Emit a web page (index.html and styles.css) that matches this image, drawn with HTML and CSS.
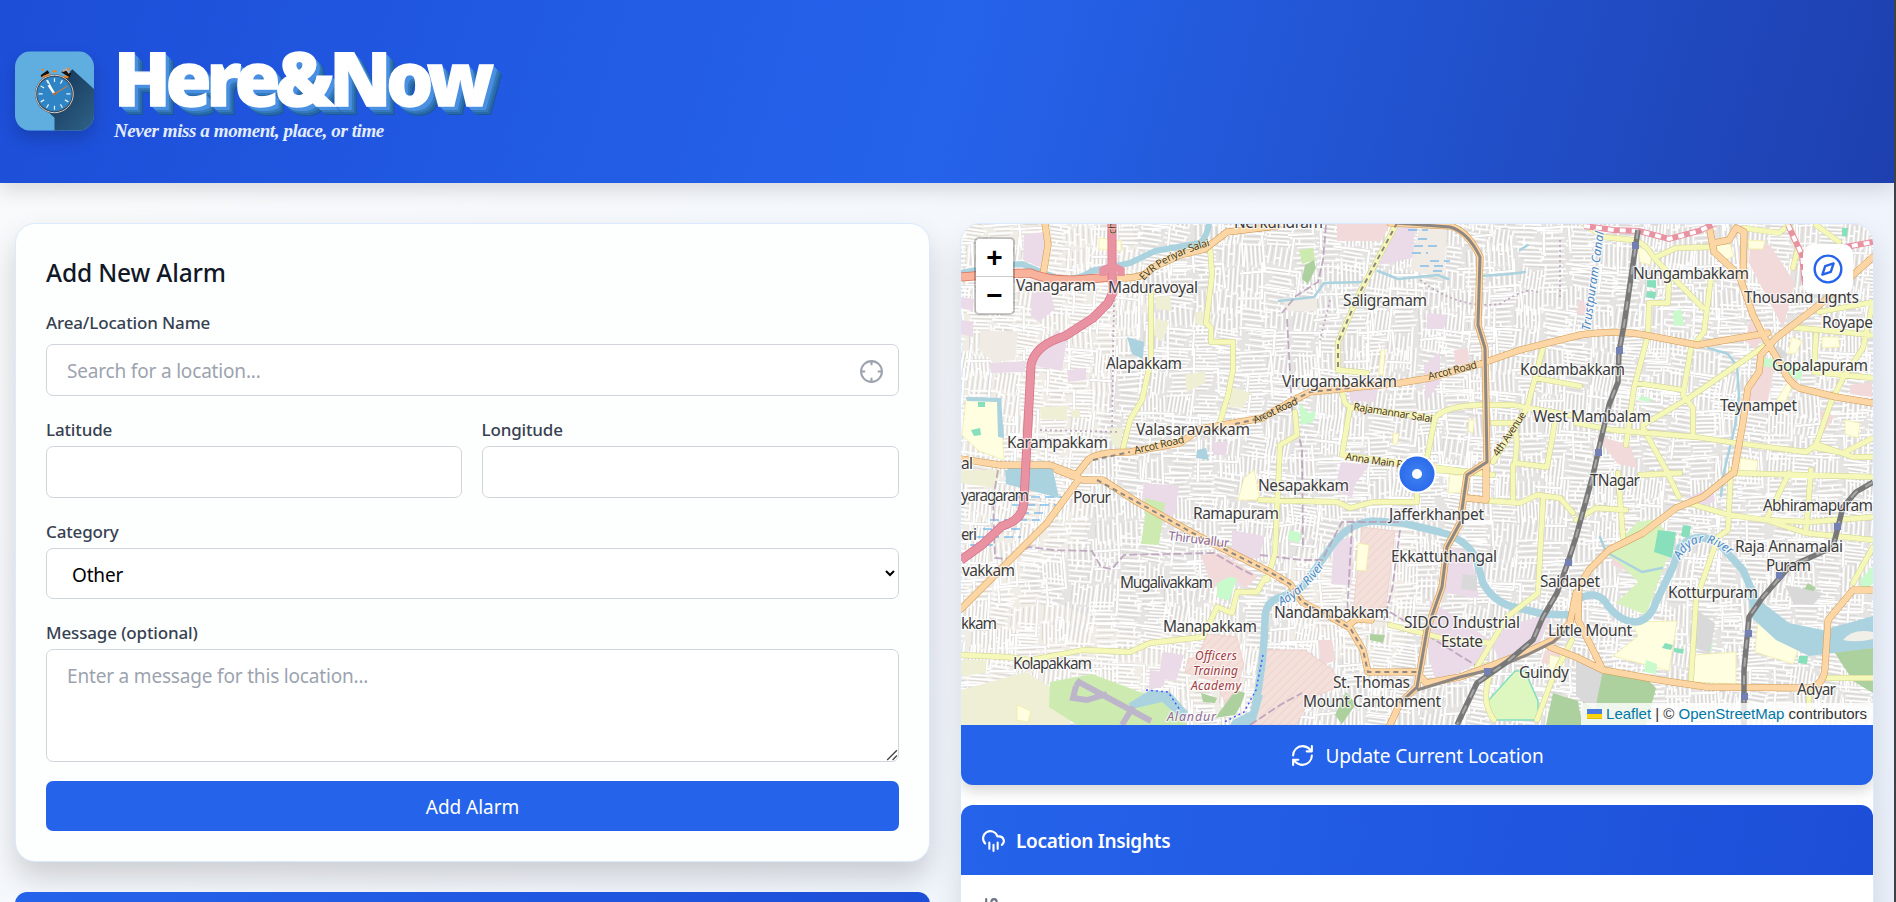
FILE: index.html
```html
<!DOCTYPE html>
<html lang="en">
<head>
<meta charset="utf-8">
<title>Here&amp;Now</title>
<link rel="stylesheet" href="styles.css">
</head>
<body>
<header class="site-header">
  <svg class="logo" viewBox="0 0 80 80" aria-hidden="true">
    <defs>
      <linearGradient id="logoShade" x1="0" y1="0" x2="1" y2="1"><stop offset=".25" stop-color="#173b5c"/><stop offset="1" stop-color="#2f6288"/></linearGradient>
    </defs>
    <rect width="80" height="80" fill="#60addf"/>
    <path d="M58 18 80 38V80H40V67L26 54Z" fill="url(#logoShade)"/>
    <path d="m26 24 7-5 2 3-8 4zM47 21l3-3 7 4-2 4z" fill="#111"/>
    <path d="m28 26 7-3M38 20h4M49 25l5 1M27 18l2 1M55 17l-2 2" stroke="#f58220" stroke-width="2"/>
    <path d="m48 20 4-2 3 4" stroke="#b9aaa5" stroke-width="2" fill="none"/>
    <circle cx="40" cy="43" r="18.7" fill="#2f84c5" stroke="#32363d" stroke-width="2"/>
    <circle cx="40" cy="43" r="19" fill="none" stroke="#d9d5d2"/>
    <path d="M40 27v4M40 55v4M24 43h4M52 43h4M32 29l2 3.500M48 29l-2 3.500M26 35l3.500 2M54 51l-3.500-2M26 51l3.500-2M32 57l2-3.500M48 57l-2-3.500" stroke="#e8f2fa" stroke-width="1.200"/>
    <path d="m40 43-6-9" stroke="#fff" stroke-width="2.400"/>
    <path d="m40 43-7-14" stroke="#fff" stroke-width="1"/>
    <path d="m40 43 13-8" stroke="#c57b45" stroke-width="1.200"/>
    <circle cx="40" cy="43" r="1.500" fill="#c2642c"/>
  </svg>
  <div class="brand">
    <h1 class="brand-name">Here&amp;Now</h1>
    <p class="brand-tagline">Never miss a moment, place, or time</p>
  </div>
</header>

<main class="content">
  <div class="column">
    <form class="alarm-card">
      <h2 class="card-title">Add New Alarm</h2>
      <label class="field-label field-label-wide">Area/Location Name</label>
      <div class="search">
        <input class="control search-input" placeholder="Search for a location...">
        <svg class="search-icon" viewBox="0 0 24 24" aria-hidden="true"><circle cx="12" cy="12" r="10"/><path d="M22 12h-4M6 12H2M12 6V2M12 22v-4"/></svg>
      </div>
      <div class="coords">
        <div><label class="field-label">Latitude</label><input class="control"></div>
        <div><label class="field-label">Longitude</label><input class="control"></div>
      </div>
      <label class="field-label">Category</label>
      <select class="control select"><option>Other</option></select>
      <label class="field-label">Message (optional)</label>
      <div class="message-box">
        <textarea class="control message" placeholder="Enter a message for this location..."></textarea>
        <svg class="grip" viewBox="0 0 12 12" aria-hidden="true"><path d="M2 11 11 2M7 11l4-4"/></svg>
      </div>
      <button class="add-button" type="button">Add Alarm</button>
    </form>
    <section class="alarm-list"></section>
  </div>

  <div class="side-card">
    <div class="map">
      <svg class="map-canvas" viewBox="961 224 912 501" preserveAspectRatio="none">
        <defs>
          <pattern id="hatch" width="6" height="6" patternUnits="userSpaceOnUse" patternTransform="rotate(45)"><rect width="6" height="6" fill="#f3e0da"/><path d="M0 0V6" stroke="#f1cfca" stroke-width="1.500"/></pattern>
          <radialGradient id="pin"><stop offset="0" stop-color="#3f83f2"/><stop offset="1" stop-color="#2c6bea"/></radialGradient>
          <path id="evr" d="M1144 281Q1164 258 1213 245"/>
          <path id="adyar1" d="M1281 606Q1306 594 1328 560"/>
          <path id="adyar2" d="M1680 560Q1698 526 1734 559"/>
        </defs>
        <rect x="961" y="223" width="912" height="503" fill="#e6e4e2"/>
        <path d="M961 223h170l20 90-40 60-30 180-120 50zM961 560l180 80 70-40 60 60-10 66H961zM1290 560l90-50 40 0-20 170-110-40z" fill="#f0ede7"/>
        <g id="blocks"></g>
        <g id="streets" fill="none"></g>

        <g fill="#ebdbe8">
          <path d="M1024 235l20-3 3 38-24-10zM1032 293l18-2 5 18-16 13-8-6zM961 297l13 2-1 12-12-3zM961 320l12 2v15l-12-3zM1035 358l22-28 10 8-5 33-26-5zM990 363l35-2v11l-34 1zM1068 370l18-2v12l-18 2zM1144 483l35 3-4 28-20 8-14-15zM1232 530l32 6-4 22-28 3zM1166 652l18 3-8 26-17-3 3-25zM1150 670l16 2-2 14-15 4zM1334 540l20-3-3 48-20-1zM1349 392l30-4-5 14-24-1zM1397 223l18 0-2 35-34 7zM1427 313l20 2-3 14-17 0zM1424 365l16-13 0 30-14 20zM1341 462l28 3-18 25-14-10zM1340 471l18 2-6 24-13-4zM1443 545l28 8 8 45-34-5zM1430 600l60 40-14 24-40 20-8-32zM1505 627l48-15-14 33-40 15-6-14zM1213 442l15 0-2 13-13 0zM1688 497l25-10 2 14-14 7z"/>
        </g>
        <g fill="#f2dadb">
          <path d="M1337 223h54l-10 18h-44zM1454 350l14-2 1 16-14 2zM1201 555l20-2 37 23-12 12-10-7-24 7zM1750 240l20 5 25 38-12 45-34-65zM1750 320l15 15-10 14-10-8zM1757 350l17 18-6 33-14 0zM1748 385l10-5-2 20-12 3zM1813 258l15-8 8 14-10 8zM1850 385l22-3v15l-22-3zM1595 435l35 10 8 23-20-4zM1612 545l18 10 2 18-20-8zM1318 640l14 0 4 20-15 6zM1580 300l8 3-3 12-9-2zM1820 410l15 6-14 20zM1545 650l14 3-4 12-14-2z"/>
        </g>
        <g fill="url(#hatch)" stroke="#edc5c3" stroke-width=".6">
          <path d="M1362 527l33 4-9 75-25 10-8-4z"/>
          <path d="M1207 634l30 3 7 28-7 22-11 17-10-22-31-10 3-13 10-3zM1265 650l40 0 28 20 8 16-30 12-15 27h-45z"/>
        </g>
        <g fill="#eeefd5">
          <path d="M961 470h40l-6 18-34-5zM1040 407l27-1 0 14-26-1zM1071 410l9 0 0 8-9-1zM1185 375l20-4 0 12-18 9zM1155 297l15-1 2 15-16-2zM1155 318l14 4-7 20-8-7zM1195 312l14-1 4 12-5 5-13-5zM1231 387l20 6-8 15-14-1zM1109 428l14 0-3 21-8-5zM961 690l65-18 40 25 4 28H961zM961 660l25 0 0 13-25 3z"/>
        </g>
        <g fill="#f0ece5"><path d="M980 330l38 2-3 28-22 2-14-12zM1422 223l25 6-3 50-34-9 4-23zM1285 299l31-2 1 14-33 0z"/></g>
        <g fill="#fffee0" stroke="#f0ea9c" stroke-width=".7">
          <path d="M966 399l34 1 4 60-25-9-17-16zM1099 238l22 3v10l-22-2zM1244 478l10-8 6 30-22 0zM1450 474l16 3-4 15-14 1zM1358 543l11 2-3 26-10-1zM1632 622l45-1-8 50-56-15 25-20zM1694 655l42-3v32l-43-2zM1758 620l18 12 22 18-5 14-38-12zM1716 245l14-1 4 12-14 6zM1748 240l17 1-2 8-14 0zM1638 247l15 5-3 13-10-3zM1788 382l6-2-8 21-10 0zM1792 337l10 4-6 12-8 1zM1740 458l18 3-2 12-16 0zM1845 420l15 3-2 15-13-4zM1822 337l16 0 2 10-18 1zM1017 705l14 6-3 11-11-2zM1550 655l12 3-4 20-10-2zM1381 350l4 0-2 25-4 0zM1469 420l5 0-1 13-5-2zM1393 433l6 1-2 10-4 0z"/>
        </g>
        <g fill="#cdebb0">
          <path d="M1145 498l20 5-6 42-18-1 4-28zM1050 682l42-8 80 30 15 21-110 0-28-18zM1299 250l14-2 2 12-13 4z"/>
          <path d="M1607 555l30-33 20-3 16 25-8 20-19 51-30-12 22-21-18-19z" fill="#d8f2bd"/>
          <path d="M1515 671l10 0 13 30 0 19h-46l-5-18z" fill="#def6c0" stroke="#83dfc0" stroke-width="1.500"/>
        </g>
        <g fill="#add19e"><path d="M1305 265l9-5 2 8-8 16-6-5zM1370 634l15 1-2 8-13-3zM1346 692l10 12-14 20-7-9zM1201 693l16 5-2 5-12-1zM1236 690l9 3-4 12-6 10-20 3zM1604 671l40 5 12 12-10 37-67 0 5-28zM1553 693l25 8 4 24-36 0zM1833 650l40-2v45l-20-12zM1808 583l8 5-5 7-8-4z"/></g>
        <g fill="#c8facc"><path d="M1237 578l-8 23-12-4 0-14 12-6zM1299 403l10 10 7-2-3 11-12 3zM1289 530l12 3-1 10-12-3zM1763 358l16 1 24 10-2 12-22-12-16-3zM1646 660l11 4-1 10-12-2zM1707 637l6 2-1 13-6-2zM1860 580l13-14v18l-11 7zM1673 312l8-3 3 16-10 1zM1640 396l11 2-2 4-10-2z"/></g>
        <g fill="#88dfbb"><path d="M1647 280l9 0 0 8-9-1zM1647 291l9 1-1 7-9-2zM1842 228l6 0-1 9-5-1zM971 430l9-2 1 7-7 1zM1658 530l18 2-4 26-18-6zM1683 525l8 1-2 13-8-3zM1665 643l8 2-2 5-9-2zM1674 648l10 1-1 5-9-2zM1799 656l9 0-1 8-9-1zM978 402l7 0v5l-7 0z"/></g>
        <path d="M1076 686l3-4 72 39M1076 686l-3 12 14 2 20-6M1134 705l-12 20" fill="none" stroke="#bdb6cb" stroke-width="6"/>
        <g fill="#d9d9d9"><path d="M1777 345l12 10-10 5-8-7zM1697 610l18 13-5 30-16-5zM1785 585l38 8-10 12-20-2zM1576 660l27 10-8 40-19-14zM1463 574l14 2 0 15-16-2z"/></g>

        <g fill="#aad3df">
          <path d="M1127 337l17 5-1 17-11-5zM1197 450l9-2 3 12-13-2zM1005 470l48 0 6 28-53-14zM966 397l35 1 3 40-6-1-1-35-30-1zM1006 466l47 0-1 12-40 0zM1128 704l22-14 20 2 18 20-4 9-22-19-26 6z"/>
          <path d="M1748 597l15 6 26 20 34 7 50-14v32l-64 8-33-16-24-22z"/>
          <path d="M1233 720l20-10 6-15 4 0-7 25-6 5h-20z"/>
        </g>
        <path d="M1843 640q10-12 30-8v7q-16 4-30 1" fill="#f2efe9"/>
        <g fill="none" stroke="#aad3df" stroke-linejoin="round" stroke-linecap="round">
          <path d="M961 273Q1000 265 1022 264 1040 272 1060 279 1080 280 1092 271 1115 266 1130 263L1155 251 1200 243Q1208 235 1209 223" stroke-width="6"/>
          <path d="M1254 712Q1264 665 1265 620 1265 600 1282 597L1303 586 1327 553Q1345 523 1373 521L1403 523 1440 532Q1466 539 1476 558L1483 583Q1492 600 1510 606L1543 614 1573 615 1578 600Q1592 590 1604 600 1618 622 1636 622 1650 620 1656 602L1673 567 1680 547Q1700 528 1722 547L1743 570 1756 600" stroke-width="7.500"/>
          <path d="M1600 537l6 15 36 20 20-4M1708 348l20 6 9 12 2 30-4 30-12 50-2 20M1378 271l20 8 40-4 10 4M1279 301l35-4 10-14 40-1M1480 276l30-2 15-2M1520 250l8-5" stroke-width="2.500"/>
        </g>
        <g stroke="#4aa3ea" stroke-width="1.200" stroke-dasharray="9 5">
          <path d="M1017 497h45M1012 505h48M1020 513h28M990 520h50M983 529h38M976 537h45M970 545h25M1408 230h20M1418 239h12M1414 246h25M1412 253h16M1430 261h20M1420 266h25M1433 271h12"/>
        </g>

        <g fill="none" stroke="#b79db8" stroke-width="1.800" stroke-dasharray="8 3" opacity=".85">
          <path d="M1326 225l-3 35-5 22-22 14-14 17M1287 319l5 90 10 40 1 100M998 470l-5 30 2 58 12 1 22-12 25 3 38 1 9 16 11 2 12-14 90-2 27 16 12 6M1260 555l42 5 20 0 20-38 60 0M1390 612l90 56M1250 725l30-20 22-12M1352 525l-5 90M1400 530l-8 60-8 30"/>
          <path d="M1115 230l-3 200M1420 280q40 30 80 24 30-20 40-10M1560 240v60M1330 300l-10 40M1040 430l80 2" stroke-dasharray="2 3"/>
        </g>

        <g id="yellow" fill="none" stroke-linejoin="round" stroke-linecap="round">
          <path d="M1210 247l2 28-6 48 5 5v14h22v28l-5 25-8 27M1151 293v67l-9 40-12 20-7 28M1397 223l-37 69-22 50v28l29 3M1342 392l3 11 5 4 83 11M1350 407l-8 48 58 8 93 12M1295 412l2 23-17 10-5 108-8 27M1427 458l8-40q10-12 45-13l33 0 67 12M1543 348l-8 30-8 30-34 54M1535 378l45 8M1493 423h20q6 10 2 40l32 4 8-45M1260 500l77 2 13 6 23-6 44 0v-12M1435 470l42 3M1480 500l40 3 17-8 23 3 13 15M1513 465v36M1543 500l-5 93-31 24-30 50M1390 625l60 15 40 3M1572 640l-19 37-16 43M961 655l46 2 23 3 53-10 47 2 20-9 53-6 14-30 15 6 5-21 20 0 8-14M1494 720q-15-20-2-50l-5-5"/>
          <path d="M1586 225l17 12 30 3q12 2 21 18l22-10 35-1M1654 258l49 50M1711 278l-7 54-13 16-8 47 10 13v27M1669 278l-1 25-19 0-1 32-14 53-8 57M1766 345l-77 53-46 27M1576 423l37 7 83 7 40 6 70 9 10-7 15-43 12-24 20-30 10-46M1816 448l27 5 30-15M1816 444l37 13h20M1789 327l84 8M1819 312l54-10M1744 228l35 5 10-8 9 23-5 20M1636 383l47 7M1643 428l26 47M1816 225l23 17M1816 335l-2 37 59 6M1688 503l41 12 37 5 40 13 67 7M1766 520l43 2 64-5M1731 470l-3 60-10 7-22 63-5 80M1811 470l-5 63M1789 473l-23 47M1734 473l139 4M1666 470l13 27M1618 473l5 64M1809 688v22M1824 678l49 0M1873 547l-20 36M1576 520l20-12 30 2M1640 475l40-2"/>
        </g>
        <g id="orange" fill="none" stroke-linejoin="round" stroke-linecap="round">
          <path d="M1045 223l3 22-5 30M1112 277q30 4 40-9l28-13 25-6 22-17 50-6M961 459l39 6h50l27 10M1077 474l11-14q8-8 42-8l50-9 20-14 62-11 28-16 20-10 40-4 50-5 30-5 50-14 40-14 60-15q40-6 70 1l47 9 71-12M1057 470l26 10h20l34 22 63 35 70 35 20 12 12 18 25 13 23 13 13 22 5 22h49l10 12M1077 482l-30 41-30 30-24 24-32 32M1390 223l60 3q18 5 30 31l-2 68 7 23 2 114-20 13-7 48-13 24-5 40-15 43-7 40-3 17-17 16-10 22M1427 683l33-6 33-12 34-13 26-12 17-17 6-30M1350 624l6-5 15 1M1550 647l26 10 27 13 56 10 47 7 103 1q15-3 16-20l3-48 25-30h20M1733 473l-30 24-27 11-33 25-34 17-20 20-10 17-1 33 23 46M1734 473l9-51 5-34 11-16 2-17 15-17 47-36 50-45M1709 225l5 27 25 23 14 40 10 20 20 33q5 14 16 20l37 9 37 6M1714 243l15-3 7-12 8 4-1 46M1486 462l0 38-20-2"/>
        </g>
        <path d="M961 277q40-4 69-4 20 8 45 7l37-3" fill="none" stroke="#d8735b" stroke-width="9"/>
        <path d="M961 277q40-4 69-4 20 8 45 7l37-3" fill="none" stroke="#f9b29c" stroke-width="7.500"/>
        <path d="M1584 226l30 4 25 1 30 8 30-8 15-7M1788 225l14 30 3 30M1840 248l33-6" fill="none" stroke="#e892a2" stroke-width="6"/>
        <path d="M1584 226l30 4 25 1 30 8 30-8 15-7M1788 225l14 30 3 30M1840 248l33-6" fill="none" stroke="#fff" stroke-width="4" stroke-dasharray="6 6"/>
        <path d="M1112 223v52l1 17-5 11-15 15-28 18q-30 9-34 29-6 110-7 135 0 20-22 26l-20 19-21 15" fill="none" stroke="#d9728a" stroke-width="9"/>
        <path d="M1112 223v52l1 17-5 11-15 15-28 18q-30 9-34 29-6 110-7 135 0 20-22 26l-20 19-21 15M1103 276v-6q9-6 18 0v6" fill="none" stroke="#e892a2" stroke-width="7.500"/>
        <g fill="none" stroke="#8f8780" stroke-width="3">
          <path d="M1396 223l54 4q18 5 30 30l-2 68 7 23 2 114-20 13-7 48-13 24-5 40-15 43-7 40-3 17-17 16M1417 690l43-13 33-8 34-14 26-13 17-15"/>
          <path d="M1097 480l40 22 63 35 70 35 20 12 12 18 25 13 23 13 13 22 5 22h49M1397 223l-37 69-22 50v28M1093 460l37-8M1235 424l27-6 28-16 20-10 40-4" stroke-width="2" stroke-dasharray="5 4"/>
        </g>
        <g fill="none" stroke-linejoin="round">
          <path d="M1638 230l-14 95-5 27-1 30-9 23-10 43-6 27-17 62-8 25-11 31-14 24-10 23-26 22-30 21-20 42M1873 482l-17 10-13 15-10 40-24 11-20 9-26 30-14 20-5 53v55" stroke="#787878" stroke-width="5.500"/>
          <path d="M1638 230l-14 95-5 27-1 30-9 23-10 43-6 27-17 62-8 25-11 31-14 24-10 23-26 22-30 21-20 42M1873 482l-17 10-13 15-10 40-24 11-20 9-26 30-14 20-5 53v55" stroke="#a8a8a8" stroke-width="2" stroke-dasharray="9 9"/>
        </g>
        <g fill="#7380b3"><path d="M1632 242h7v7h-7zM1616 347h7v7h-7zM1595 449h7v7h-7zM1565 559h7v7h-7zM1484 668h7v7h-7zM1834 523h7v7h-7zM1776 572h7v7h-7zM1745 630h7v7h-7zM1741 693h7v7h-7z"/></g>
        <path d="M1146 690l22 2 12 18M1263 655l-7 35-12 22-20 10" stroke="#3f55ff" stroke-width="1.400" stroke-dasharray="2 3" fill="none"/>

        <g class="road-names">
          <text><textPath href="#evr" textLength="76">EVR Periyar Salai</textPath></text>
          <text transform="translate(1135 454) rotate(-13)" textLength="51">Arcot Road</text>
          <text transform="translate(1255 424) rotate(-25)" textLength="48">Arcot Road</text>
          <text transform="translate(1429 380) rotate(-14)" textLength="50">Arcot Road</text>
          <text transform="translate(1353 410) rotate(9)" textLength="80">Rajamannar Salai</text>
          <text transform="translate(1345 460) rotate(8)" textLength="58">Anna Main R</text>
          <text transform="translate(1498 457) rotate(-56)" textLength="51">4th Avenue</text>
          <text transform="translate(1116 234) rotate(-90)">ch</text>
        </g>
        <g class="water-names">
          <text><textPath href="#adyar1" textLength="60">Adyar River</textPath></text>
          <text><textPath href="#adyar2" textLength="60">Adyar River</textPath></text>
          <text transform="translate(1590 331) rotate(-82)" textLength="100">Trustpuram Canal</text>
        </g>
        <g class="district-names">
          <text transform="translate(1168 540) rotate(7)" textLength="61">Thiruvallur</text>
          <text class="italic" x="1167" y="721" textLength="49">Alandur</text>
        </g>
        <g class="army-names">
          <text x="1195" y="660" textLength="42">Officers</text><text x="1193" y="675" textLength="45">Training</text><text x="1191" y="690" textLength="50">Academy</text>
        </g>
        <g class="place-names">
          <text x="1234" y="228" textLength="89">Nerkundram</text><text x="1016" y="291" textLength="80">Vanagaram</text><text x="1108" y="293" textLength="90">Maduravoyal</text>
          <text x="1106" y="369" textLength="76">Alapakkam</text><text x="1136" y="435" textLength="114">Valasaravakkam</text><text x="1007" y="448" textLength="101">Karampakkam</text><text x="961" y="469" textLength="12">al</text>
          <text x="1343" y="306" textLength="84">Saligramam</text><text x="1282" y="387" textLength="115">Virugambakkam</text><text x="1520" y="375" textLength="105">Kodambakkam</text><text x="1533" y="422" textLength="118">West Mambalam</text>
          <text x="1633" y="279" textLength="116">Nungambakkam</text><text x="1744" y="303" textLength="115">Thousand Lights</text><text x="1822" y="328" textLength="51">Royape</text><text x="1772" y="371" textLength="96">Gopalapuram</text><text x="1720" y="411" textLength="77">Teynampet</text>
          <text x="961" y="501" textLength="68">yaragaram</text><text x="1073" y="503" textLength="38">Porur</text><text x="961" y="540" textLength="16">eri</text><text x="962" y="576" textLength="53">vakkam</text><text x="961" y="629" textLength="36">kkam</text>
          <text x="1193" y="519" textLength="86">Ramapuram</text><text x="1258" y="491" textLength="91">Nesapakkam</text><text x="1120" y="588" textLength="93">Mugalivakkam</text><text x="1163" y="632" textLength="94">Manapakkam</text><text x="1013" y="669" textLength="79">Kolapakkam</text>
          <text x="1389" y="520" textLength="95">Jafferkhanpet</text><text x="1391" y="562" textLength="106">Ekkattuthangal</text><text x="1274" y="618" textLength="115">Nandambakkam</text><text x="1404" y="628" textLength="116">SIDCO Industrial</text><text x="1441" y="647" textLength="42">Estate</text>
          <text x="1333" y="688" textLength="77">St. Thomas</text><text x="1303" y="707" textLength="138">Mount Cantonment</text><text x="1519" y="678" textLength="50">Guindy</text><text x="1540" y="587" textLength="60">Saidapet</text><text x="1548" y="636" textLength="84">Little Mount</text>
          <text x="1590" y="486" textLength="50">TNagar</text><text x="1763" y="511" textLength="110">Abhiramapuram</text><text x="1735" y="552" textLength="108">Raja Annamalai</text><text x="1766" y="571" textLength="45">Puram</text><text x="1668" y="598" textLength="90">Kotturpuram</text><text x="1797" y="695" textLength="39">Adyar</text>
        </g>
        <circle cx="1417" cy="474" r="19.500" fill="#fff"/>
        <circle cx="1417" cy="474" r="17.500" fill="url(#pin)"/>
        <circle cx="1417" cy="474" r="5" fill="#fff"/>
      </svg>
      <div class="zoom-control"><span class="zoom-button">+</span><span class="zoom-button">−</span></div>
      <div class="compass"><svg viewBox="0 0 24 24" aria-hidden="true"><circle cx="12" cy="12" r="10"/><path d="m16.200 7.800-2.100 6.300-6.300 2.100 2.100-6.300z"/></svg></div>
      <div class="attribution"><svg class="flag" viewBox="0 0 12 8"><path fill="#4c7be1" d="M0 0h12v4H0z"/><path fill="#ffd500" d="M0 4h12v3H0z"/><path fill="#e0bc00" d="M0 7h12v1H0z"/></svg> <a>Leaflet</a> | © <a>OpenStreetMap</a> contributors</div>
    </div>
    <button class="update-button" type="button">
      <svg viewBox="0 0 24 24" aria-hidden="true"><path d="M3 12a9 9 0 0 1 9-9 9.750 9.750 0 0 1 6.740 2.740L21 8M21 3v5h-5M21 12a9 9 0 0 1-9 9 9.750 9.750 0 0 1-6.740-2.740L3 16M8 16H3v5"/></svg>
      <span>Update Current Location</span>
    </button>
    <section class="insights">
      <h2 class="insights-head">
        <svg viewBox="0 0 24 24" aria-hidden="true"><path d="M4 14.900A7 7 0 1 1 15.710 8h1.790a4.500 4.500 0 0 1 2.500 8.200M16 14v6M8 14v6M12 16v6"/></svg>
        <span>Location Insights</span>
      </h2>
      <div class="insights-body">
        <svg viewBox="0 0 24 24" aria-hidden="true"><path d="M5 2v9M10 14V4.500a2.500 2.500 0 0 1 5 0V14"/></svg>
        <span>Weather Conditions</span>
      </div>
    </section>
  </div>
</main>
<script src="map.js"></script>
</body>
</html>
```

FILE: map.js
```js
// Fills the map with minor streets and gives the main roads their casings.
const NS = "http://www.w3.org/2000/svg";
let seed = 71;
const rnd = () => (seed = (seed * 16807) % 2147483647) / 2147483647;

function addPath(parent, d, stroke, width) {
  const p = document.createElementNS(NS, "path");
  p.setAttribute("d", d);
  p.setAttribute("fill", "none");
  p.setAttribute("stroke", stroke);
  p.setAttribute("stroke-width", width);
  parent.appendChild(p);
}

let minor = "", larger = "", blocks = "";
for (let cy = 212; cy < 740; cy += 21) {
  for (let cx = 950; cx < 1890; cx += 25) {
    const x0 = cx + rnd() * 8, y0 = cy + rnd() * 7;
    const angle = (rnd() - 0.5) * 0.25 + 0.05 + (rnd() < 0.45 ? Math.PI / 2 : 0);
    const c = Math.cos(angle), s = Math.sin(angle);
    const gap = 3.4 + rnd() * 2.4;
    const at = (u, v) => (x0 + u * c - v * s).toFixed(1) + " " + (y0 + u * s + v * c).toFixed(1);
    for (let v = -12; v <= 12; v += gap) {
      const a = -15 + rnd() * 7, b = 15 - rnd() * 7;
      minor += "M" + at(a, v) + "L" + at(b, v + rnd() - 0.5);
      blocks += "M" + at(a + 2, v + gap / 2) + "L" + at(b - 3, v + gap / 2);
      if (rnd() < 0.5) {
        const u = a + rnd() * (b - a);
        minor += "M" + at(u, v) + "L" + at(u, v + gap);
      }
    }
    if (rnd() < 0.5) larger += "M" + at(-19, -11) + "L" + at(17, -12) + "L" + at(18, 13);
  }
}
addPath(document.getElementById("blocks"), blocks, "#d6d3d0", 0.8);
const streets = document.getElementById("streets");
addPath(streets, minor, "#ffffff", 1.6);
addPath(streets, larger, "#d6d4d3", 3);
addPath(streets, larger, "#ffffff", 2.3);

function casedRoad(id, casing, fill, width) {
  const group = document.getElementById(id);
  const lines = [...group.querySelectorAll("path")].map((p) => p.getAttribute("d"));
  group.replaceChildren();
  lines.forEach((d) => addPath(group, d, casing, width + 1));
  lines.forEach((d) => addPath(group, d, fill, width));
}
casedRoad("yellow", "#cfd291", "#f5f8b8", 4.8);
casedRoad("orange", "#cf9a55", "#fcd6a4", 6);
```

FILE: styles.css
```css
* { box-sizing: border-box; }
body {
  margin: 0;
  height: 902px;
  overflow: hidden;
  border-right: 2px solid #3f4144;
  font-family: "Noto Sans", "Open Sans", sans-serif;
  font-size: 19px;
  color: #111827;
  background: linear-gradient(135deg, #f9fafb, #f3f7fd 55%, #ebf1fb);
}
h1, h2, p { margin: 0; }
button { font: inherit; border: 0; }
svg { display: block; flex: none; }

.site-header {
  position: relative;
  display: flex;
  align-items: center;
  gap: 20px;
  height: 183px;
  padding: 0 15px 2px;
  background: linear-gradient(105deg, #1d4ed8, #2563eb 50%, #1e40af);
  box-shadow: 0 8px 18px rgba(0, 0, 0, .12);
}
.logo {
  width: 79px;
  height: 80px;
  border-radius: 16px;
  box-shadow: 0 8px 16px rgba(0, 0, 0, .18);
}
.brand { padding-top: 3px; }
.brand-name {
  font-size: 74px;
  line-height: 74px;
  font-weight: 900;
  letter-spacing: -5px;
  color: #fff;
  -webkit-text-stroke: 1.3px #fff;
  text-shadow: 1px 1px #4a90e2, 2px 2px #4a90e2, 3px 3px #4a90e2, 4px 4px #4a90e2, 5px 5px #357abd, 6px 6px #357abd, 7px 7px #286aa9, 8px 8px #286aa9, 9px 9px #1e5799;
}
.brand-tagline {
  margin-top: 4px;
  font: italic 700 19px/24px "Liberation Serif", serif;
  color: #e3edfe;
  letter-spacing: -.4px;
}

.content {
  display: grid;
  grid-template-columns: 915px 914px;
  gap: 30px;
  padding: 40px 0 0 15px;
}
.column { display: flex; flex-direction: column; gap: 30px; }
.alarm-card {
  display: flex;
  flex-direction: column;
  height: 639px;
  padding: 30px;
  border: 1px solid #dbeafe;
  border-radius: 20px;
  background: #fdfffe;
  box-shadow: 0 16px 30px rgba(0, 0, 0, .17);
}
.card-title { height: 40px; margin-bottom: 15px; font-size: 24.5px; line-height: 38px; font-weight: 500; letter-spacing: -.15px; }
.field-label { display: block; height: 28px; margin-bottom: 2px; font-size: 17px; line-height: 27px; font-weight: 500; color: #374151; letter-spacing: -.15px; }
.field-label-wide { margin-bottom: 7px; }
.control {
  display: block;
  width: 100%;
  height: 52px;
  margin: 0 0 20px;
  padding: 2px 20px 0;
  border: 1px solid #d1d5db;
  border-radius: 7px;
  background: #fff;
  font: inherit;
  letter-spacing: -.18px;
  color: #000;
}
.control::placeholder { color: #9ca3af; opacity: 1; }
.search { position: relative; }
.search-icon { position: absolute; right: 15px; top: 15px; width: 25px; height: 25px; fill: none; stroke: #9ca3af; stroke-width: 2; }
.coords { display: grid; grid-template-columns: 416px 417px; gap: 20px; }
.coords > :last-child { margin-left: -.5px; }
.select { height: 51px; padding: 2px 4px 0 21px; }
.message-box { position: relative; margin-bottom: 19px; }
.message { height: 113px; margin: 0; padding: 13px 20px; resize: none; }
.grip { position: absolute; right: 1px; bottom: 1px; width: 13px; height: 13px; stroke: #444; stroke-width: 1.2; }
.add-button { height: 50px; padding-top: 3px; border-radius: 7px; background: #2563eb; color: #fff; letter-spacing: -.05px; }
.alarm-list { height: 40px; border-radius: 12px 12px 0 0; background: linear-gradient(90deg, #2563eb, #1d4ed8); }

.side-card {
  height: 720px;
  border: 1px solid #dbeafe;
  border-radius: 20px 20px 0 0;
  overflow: hidden;
  background: #fff;
  box-shadow: 0 16px 30px rgba(0, 0, 0, .12);
}
.map { position: relative; height: 501px; }
.map-canvas { width: 912px; height: 501px; }
.map text { paint-order: stroke; stroke: rgba(255, 255, 255, .7); stroke-width: 2.5px; stroke-linejoin: round; }
.place-names { font-size: 15.5px; fill: #3d3d3d; }
.road-names { font-size: 10.5px; fill: #4a3c20; }
.map .road-names text { stroke-width: 1px; stroke: rgba(255, 240, 200, .6); }
.water-names { font-size: 12px; font-style: italic; fill: #4d88c4; }
.district-names { font-size: 12.5px; fill: #8d6a96; }
.italic { font-style: italic; }
.army-names { font-size: 12px; font-style: italic; fill: #9f3b43; }
.zoom-control {
  position: absolute;
  left: 13px;
  top: 13px;
  width: 41px;
  border: 2px solid rgba(0, 0, 0, .22);
  border-radius: 5px;
  background: #fff;
  background-clip: padding-box;
}
.zoom-button { display: block; height: 37px; font: bold 28px/37px "Liberation Sans", sans-serif; text-align: center; color: #000; }
.zoom-button + .zoom-button { border-top: 1px solid #ccc; }
.compass {
  position: absolute;
  right: 20px;
  top: 20px;
  display: flex;
  align-items: center;
  justify-content: center;
  width: 50px;
  height: 50px;
  border-radius: 10px;
  background: #fff;
  box-shadow: 0 2px 8px rgba(0, 0, 0, .06);
}
.compass svg { width: 32px; height: 32px; fill: none; stroke: #2563eb; stroke-width: 1.8; stroke-linejoin: round; }
.attribution {
  position: absolute;
  right: 0;
  bottom: 0;
  height: 22px;
  padding: 0 6px;
  background: rgba(255, 255, 255, .8);
  font: 15px/22px "Liberation Sans", sans-serif;
  color: #333;
  white-space: nowrap;
}
.attribution a { color: #0078a8; }
.flag { display: inline; width: 15px; height: 10px; }
.update-button {
  display: flex;
  align-items: center;
  justify-content: center;
  gap: 10px;
  width: 100%;
  height: 60px;
  border-radius: 0 0 12px 12px;
  background: #2563eb;
  color: #fff;
  letter-spacing: -.08px;
  box-shadow: 0 6px 14px rgba(0, 0, 0, .16);
}
.update-button span, .insights-head span { padding-top: 2px; }
.update-button svg, .insights svg { width: 25px; height: 25px; fill: none; stroke: currentColor; stroke-width: 2; stroke-linecap: round; stroke-linejoin: round; }
.insights { margin-top: 20px; }
.insights-head {
  display: flex;
  align-items: center;
  gap: 10px;
  height: 70px;
  padding: 0 20px;
  border-radius: 12px 12px 0 0;
  background: linear-gradient(100deg, #2563eb, #1d4ed8);
  color: #fff;
  font-size: 19px;
  font-weight: 600;
  letter-spacing: -.32px;
}
.insights-body { display: flex; gap: 10px; padding: 22px 20px; color: #6b7280; font-size: 17px; line-height: 24px; letter-spacing: -.3px; }
```
